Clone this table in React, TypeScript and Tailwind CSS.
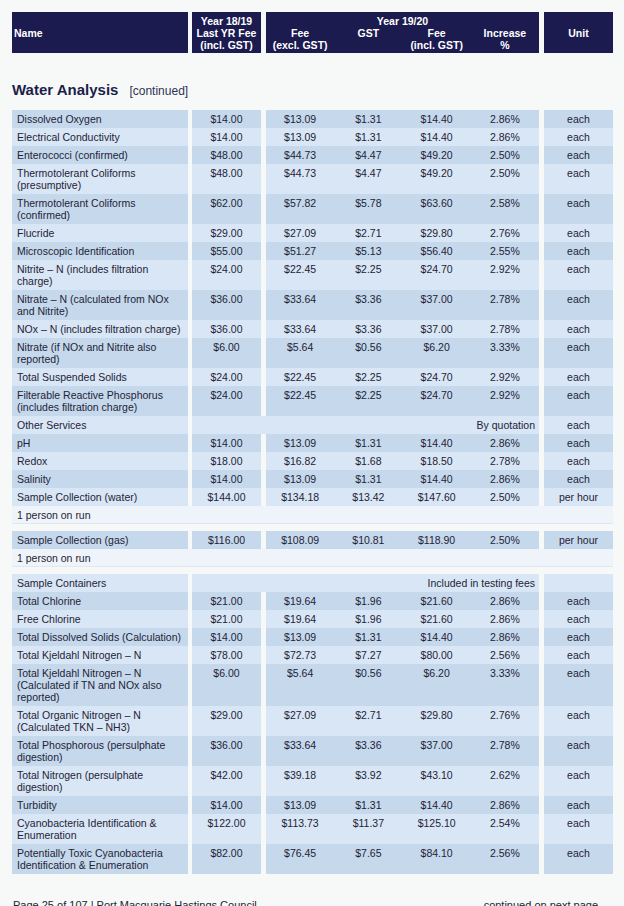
import React from "react";

type Row =
  | { kind: "data"; name: string[]; v: string[]; unit: string }
  | { kind: "merged"; name: string; text: string; unit: string }
  | { kind: "note"; text: string }
  | { kind: "gap" };

const rows: Row[] = [
  { kind: "data", name: ["Dissolved Oxygen"], v: ["$14.00", "$13.09", "$1.31", "$14.40", "2.86%"], unit: "each" },
  { kind: "data", name: ["Electrical Conductivity"], v: ["$14.00", "$13.09", "$1.31", "$14.40", "2.86%"], unit: "each" },
  { kind: "data", name: ["Enterococci (confirmed)"], v: ["$48.00", "$44.73", "$4.47", "$49.20", "2.50%"], unit: "each" },
  { kind: "data", name: ["Thermotolerant Coliforms", "(presumptive)"], v: ["$48.00", "$44.73", "$4.47", "$49.20", "2.50%"], unit: "each" },
  { kind: "data", name: ["Thermotolerant Coliforms", "(confirmed)"], v: ["$62.00", "$57.82", "$5.78", "$63.60", "2.58%"], unit: "each" },
  { kind: "data", name: ["Flucride"], v: ["$29.00", "$27.09", "$2.71", "$29.80", "2.76%"], unit: "each" },
  { kind: "data", name: ["Microscopic Identification"], v: ["$55.00", "$51.27", "$5.13", "$56.40", "2.55%"], unit: "each" },
  { kind: "data", name: ["Nitrite \u2013 N (includes filtration", "charge)"], v: ["$24.00", "$22.45", "$2.25", "$24.70", "2.92%"], unit: "each" },
  { kind: "data", name: ["Nitrate \u2013 N (calculated from NOx", "and Nitrite)"], v: ["$36.00", "$33.64", "$3.36", "$37.00", "2.78%"], unit: "each" },
  { kind: "data", name: ["NOx \u2013 N (includes filtration charge)"], v: ["$36.00", "$33.64", "$3.36", "$37.00", "2.78%"], unit: "each" },
  { kind: "data", name: ["Nitrate (if NOx and Nitrite also", "reported)"], v: ["$6.00", "$5.64", "$0.56", "$6.20", "3.33%"], unit: "each" },
  { kind: "data", name: ["Total Suspended Solids"], v: ["$24.00", "$22.45", "$2.25", "$24.70", "2.92%"], unit: "each" },
  { kind: "data", name: ["Filterable Reactive Phosphorus", "(includes filtration charge)"], v: ["$24.00", "$22.45", "$2.25", "$24.70", "2.92%"], unit: "each" },
  { kind: "merged", name: "Other Services", text: "By quotation", unit: "each" },
  { kind: "data", name: ["pH"], v: ["$14.00", "$13.09", "$1.31", "$14.40", "2.86%"], unit: "each" },
  { kind: "data", name: ["Redox"], v: ["$18.00", "$16.82", "$1.68", "$18.50", "2.78%"], unit: "each" },
  { kind: "data", name: ["Salinity"], v: ["$14.00", "$13.09", "$1.31", "$14.40", "2.86%"], unit: "each" },
  { kind: "data", name: ["Sample Collection (water)"], v: ["$144.00", "$134.18", "$13.42", "$147.60", "2.50%"], unit: "per hour" },
  { kind: "note", text: "1 person on run" },
  { kind: "gap" },
  { kind: "data", name: ["Sample Collection (gas)"], v: ["$116.00", "$108.09", "$10.81", "$118.90", "2.50%"], unit: "per hour" },
  { kind: "note", text: "1 person on run" },
  { kind: "gap" },
  { kind: "merged", name: "Sample Containers", text: "Included in testing fees", unit: "" },
  { kind: "data", name: ["Total Chlorine"], v: ["$21.00", "$19.64", "$1.96", "$21.60", "2.86%"], unit: "each" },
  { kind: "data", name: ["Free Chlorine"], v: ["$21.00", "$19.64", "$1.96", "$21.60", "2.86%"], unit: "each" },
  { kind: "data", name: ["Total Dissolved Solids (Calculation)"], v: ["$14.00", "$13.09", "$1.31", "$14.40", "2.86%"], unit: "each" },
  { kind: "data", name: ["Total Kjeldahl Nitrogen \u2013 N"], v: ["$78.00", "$72.73", "$7.27", "$80.00", "2.56%"], unit: "each" },
  { kind: "data", name: ["Total Kjeldahl Nitrogen \u2013 N", "(Calculated if TN and NOx also", "reported)"], v: ["$6.00", "$5.64", "$0.56", "$6.20", "3.33%"], unit: "each" },
  { kind: "data", name: ["Total Organic Nitrogen \u2013 N", "(Calculated TKN \u2013 NH3)"], v: ["$29.00", "$27.09", "$2.71", "$29.80", "2.76%"], unit: "each" },
  { kind: "data", name: ["Total Phosphorous (persulphate", "digestion)"], v: ["$36.00", "$33.64", "$3.36", "$37.00", "2.78%"], unit: "each" },
  { kind: "data", name: ["Total Nitrogen (persulphate", "digestion)"], v: ["$42.00", "$39.18", "$3.92", "$43.10", "2.62%"], unit: "each" },
  { kind: "data", name: ["Turbidity"], v: ["$14.00", "$13.09", "$1.31", "$14.40", "2.86%"], unit: "each" },
  { kind: "data", name: ["Cyanobacteria Identification &", "Enumeration"], v: ["$122.00", "$113.73", "$11.37", "$125.10", "2.54%"], unit: "each" },
  { kind: "data", name: ["Potentially Toxic Cyanobacteria", "Identification & Enumeration"], v: ["$82.00", "$76.45", "$7.65", "$84.10", "2.56%"], unit: "each" },
];

const DARK = "bg-[#c5d8ec]";
const LIGHT = "bg-[#d8e6f5]";

function Header() {
  return (
    <div className="flex h-[41px] text-white font-bold text-[10.5px] leading-[12px]">
      <div className="w-[176px] bg-[#1c1b50] flex items-center pl-[2px]">Name</div>
      <div className="w-[69px] ml-[4px] bg-[#1c1b50] flex flex-col items-center justify-center text-center">
        <div>Year 18/19</div>
        <div>Last YR Fee</div>
        <div>(incl. GST)</div>
      </div>
      <div className="w-[273px] ml-[5px] bg-[#1c1b50] flex flex-col justify-center text-center">
        <div>Year 19/20</div>
        <div className="grid grid-cols-4">
          <div>
            <div>Fee</div>
            <div>(excl. GST)</div>
          </div>
          <div>
            <div>GST</div>
          </div>
          <div>
            <div>Fee</div>
            <div>(incl. GST)</div>
          </div>
          <div>
            <div>Increase</div>
            <div>%</div>
          </div>
        </div>
      </div>
      <div className="w-[69px] ml-[5px] bg-[#1c1b50] flex items-center justify-center">Unit</div>
    </div>
  );
}

export default function App() {
  let shade = 0;
  const startShade: Record<number, number> = { 0: 0, 20: 0, 23: 1 };
  return (
    <div
      className="min-h-[906px] bg-[#f6f9f8] pt-[12px] pl-[12px] text-[#1f2336]"
      style={{ fontFamily: '"Liberation Sans", Arial, sans-serif' }}
    >
      <div className="w-[601px]">
        <Header />
        <div className="mt-[28px] mb-[11px] h-[18px] flex items-baseline">
          <span className="text-[15px] font-bold leading-[18px] text-[#1c1d4a]">Water Analysis</span>
          <span className="ml-[11px] text-[12px] text-[#2e3256]">[continued]</span>
        </div>
        <div className="text-[10.5px] leading-[12px]">
          {rows.map((r, i) => {
            if (i in startShade) shade = startShade[i];
            if (r.kind === "gap") return <div key={i} className="h-[7px]" />;
            if (r.kind === "note")
              return (
                <div key={i} className="h-[18px] bg-[#eef4f9] border-b border-[#dfe7ef] pl-[5px] pt-[3px]">
                  {r.text}
                </div>
              );
            const bg = shade % 2 === 0 ? DARK : LIGHT;
            shade++;
            if (r.kind === "merged")
              return (
                <div key={i} className="flex">
                  <div className={`w-[176px] ${bg} pl-[5px] py-[3px]`}>{r.name}</div>
                  <div className={`w-[347px] ml-[4px] ${bg} py-[3px] pr-[4px] text-right`}>{r.text}</div>
                  <div className={`w-[69px] ml-[5px] ${bg} py-[3px] text-center`}>{r.unit}</div>
                </div>
              );
            return (
              <div key={i} className="flex">
                <div className={`w-[176px] ${bg} pl-[5px] py-[3px] whitespace-nowrap`}>
                  {r.name.map((n, j) => (
                    <div key={j}>{n}</div>
                  ))}
                </div>
                <div className={`w-[69px] ml-[4px] ${bg} py-[3px] text-center`}>{r.v[0]}</div>
                <div className={`w-[273px] ml-[5px] ${bg} py-[3px] grid grid-cols-4 text-center`}>
                  <div>{r.v[1]}</div>
                  <div>{r.v[2]}</div>
                  <div>{r.v[3]}</div>
                  <div>{r.v[4]}</div>
                </div>
                <div className={`w-[69px] ml-[5px] ${bg} py-[3px] text-center`}>{r.unit}</div>
              </div>
            );
          })}
        </div>
        <div className="mt-[25px] flex justify-between text-[11px] leading-[13px] text-[#1f2336] pl-[1px] pr-[15px]">
          <span>Page 25 of 107 | Port Macquarie Hastings Council</span>
          <span>continued on next page</span>
        </div>
      </div>
    </div>
  );
}
